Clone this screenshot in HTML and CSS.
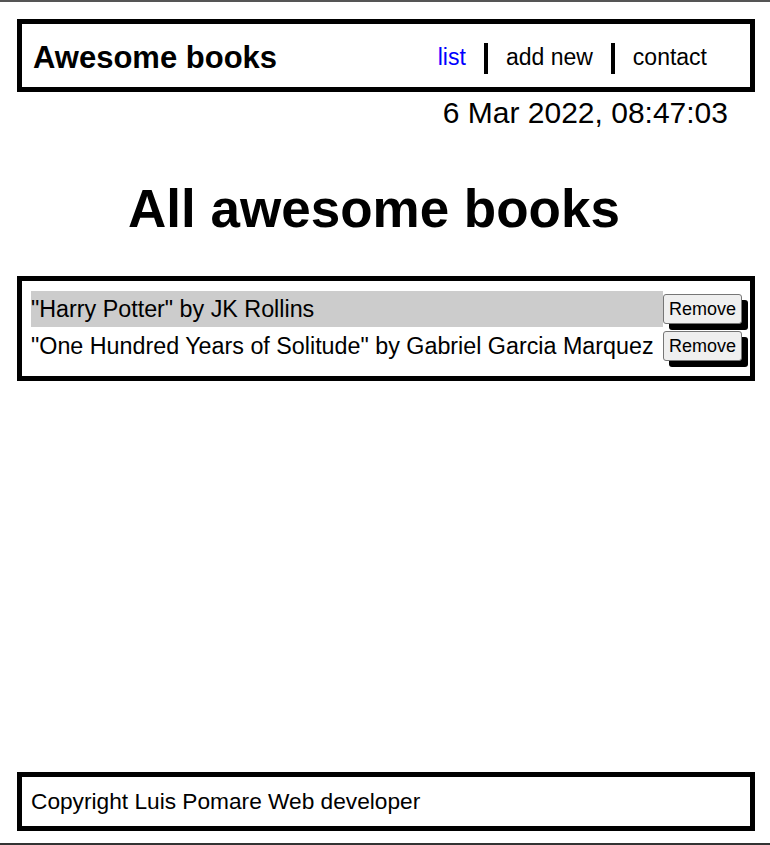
FILE: index.html
```html
<!DOCTYPE html>
<html lang="en">
<head>
    <meta charset="UTF-8">
    <meta name="viewport" content="width=device-width, initial-scale=1.0">
    <title>Awesome books</title>
    <link rel="stylesheet" href="styles.css">
</head>
<body>
    <div class="page">
        <header class="top-bar">
            <h2 class="logo">Awesome books</h2>
            <nav>
                <ul class="nav-list">
                    <li><a href="#list" class="nav-link active">list</a></li>
                    <li><a href="#add" class="nav-link">add new</a></li>
                    <li><a href="#contact" class="nav-link">contact</a></li>
                </ul>
            </nav>
        </header>
        <p class="date">6 Mar 2022, 08:47:03</p>

        <main class="books-section">
            <h1 class="section-title">All awesome books</h1>
            <ul class="book-list">
                <li class="book-item">
                    <p class="book-info odd">"Harry Potter" by JK Rollins</p>
                    <button class="remove-btn">Remove</button>
                </li>
                <li class="book-item">
                    <p class="book-info">"One Hundred Years of Solitude" by Gabriel Garcia Marquez</p>
                    <button class="remove-btn">Remove</button>
                </li>
            </ul>
        </main>

        <footer class="footer">
            <p>Copyright Luis Pomare Web developer</p>
        </footer>
    </div>
</body>
</html>
```

FILE: styles.css
```css
* {
    box-sizing: border-box;
}

body {
    margin: 0;
    font-family: "Comic Sans MS", "Liberation Sans", Arial, sans-serif;
    color: black;
    background: white;
    border-top: 2px solid #555;
    border-bottom: 2px solid #333;
}

.page {
    display: flex;
    flex-direction: column;
    min-height: calc(100vh - 4px);
    padding: 17px 15px 12px 17px;
}

.top-bar {
    display: flex;
    align-items: center;
    justify-content: space-between;
    height: 73px;
    border: 5px solid black;
    padding: 5px 25px 0 11px;
}

.logo {
    margin: 0;
    font-size: 31px;
    font-weight: bold;
}

.nav-list {
    display: flex;
    list-style: none;
    margin: 0;
    padding: 0;
}

.nav-list li {
    padding: 0 18px;
    border-left: 4px solid black;
    line-height: 28px;
}

.nav-list li:first-child {
    border-left: none;
}

.nav-link {
    color: black;
    text-decoration: none;
    font-size: 23px;
}

.nav-link.active {
    color: blue;
}

.date {
    margin: 4px 27px 0 0;
    text-align: right;
    font-size: 30px;
    line-height: 34px;
}

.section-title {
    margin: 48px 24px 36px 0;
    text-align: center;
    font-size: 53px;
    line-height: 62px;
}

.book-list {
    list-style: none;
    margin: 0;
    padding: 10px 0 12px 9px;
    border: 5px solid black;
}

.book-item {
    display: flex;
    align-items: center;
}

.book-item + .book-item {
    margin-top: 1px;
}

.book-info {
    flex: 1;
    margin: 0;
    font-size: 23.3px;
    line-height: 36px;
}

.book-info.odd {
    background: #ccc;
}

.remove-btn {
    height: 30px;
    width: 79px;
    padding: 0;
    font-family: inherit;
    font-size: 18px;
    background: #efefef;
    border: 1px solid #767676;
    border-radius: 3px;
    box-shadow: 6px 6px 0 black;
    margin-right: 8px;
    cursor: pointer;
}

.footer {
    margin-top: auto;
    border: 5px solid black;
    height: 59px;
    display: flex;
    align-items: center;
    padding: 0 9px;
}

.footer p {
    margin: 0;
    font-size: 22.7px;
}
```
